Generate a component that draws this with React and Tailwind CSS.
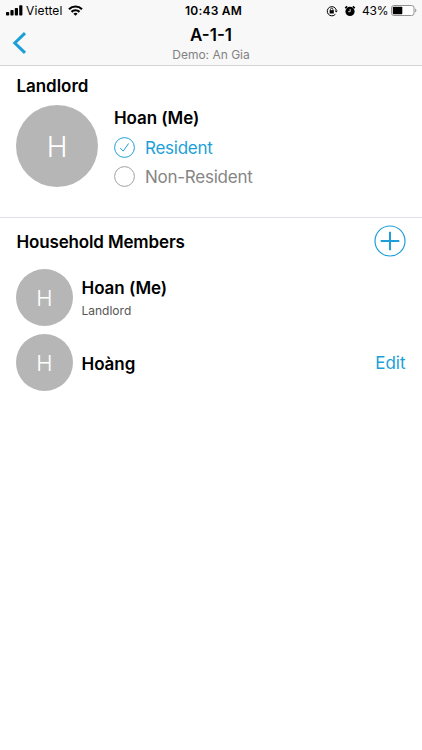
import React, { useState } from 'react';

const members = [
  { id: 1, name: 'Hoan (Me)', role: 'Landlord' },
  { id: 2, name: 'Hoàng', editable: true },
];

const StatusBar = function () {
  return (
    <div className="grid h-[21px] grid-cols-[1fr_auto_1fr] items-center pl-[6px] pr-[5px] text-[12px] leading-[20px]">
      <div className="flex items-center">
        <svg width="17" height="11" viewBox="0 0 17 11">
          <rect x="0" y="7" width="3.2" height="3.5" rx="0.8" />
          <rect x="4.4" y="5" width="3.2" height="5.5" rx="0.8" />
          <rect x="8.8" y="3" width="3.2" height="7.5" rx="0.8" />
          <rect x="13.2" y="0.3" width="3.2" height="10.2" rx="0.8" />
        </svg>
        <span className="ml-[3px] w-[37px] whitespace-nowrap tracking-[0.15px]">Viettel</span>
        <svg className="ml-[5px]" width="15" height="11" viewBox="0 0 15 11" fill="none" stroke="#000" strokeWidth="2.2">
          <path d="M1 4.2a9.2 9.2 0 0 1 13 0" />
          <path d="M3.5 6.9a5.7 5.7 0 0 1 8 0" />
          <path d="M7.5 10.8L5.4 8.7a3 3 0 0 1 4.2 0z" fill="#000" stroke="none" />
        </svg>
      </div>
      <span className="pl-[4px] font-semibold tracking-[0.2px]">10:43 AM</span>
      <div className="flex items-center justify-end">
        <svg width="12" height="12" viewBox="0 0 12 12" fill="none" stroke="#000">
          <path d="M9.4 9.2A4.6 4.6 0 1 1 10.3 5" />
          <path d="M8.6 5.4h3.2l-1.6 2.2z" fill="#000" stroke="none" />
          <rect x="3.6" y="5.2" width="4.2" height="3.3" fill="#000" stroke="none" />
          <path d="M4.5 5.5V4.4a1.2 1.2 0 0 1 2.4 0v1.1" strokeWidth="0.8" />
        </svg>
        <svg className="ml-[6px]" width="12" height="12" viewBox="0 0 12 12" fill="none" stroke="#000">
          <circle cx="6" cy="6.4" r="4.6" fill="#000" stroke="none" />
          <path d="M1.2 3.2l2-1.8M10.8 3.2l-2-1.8" strokeWidth="1.6" />
          <path d="M6.2 4v2.7H4.2" stroke="#fff" strokeWidth="0.8" />
        </svg>
        <span className="ml-[6px] w-[26px] whitespace-nowrap tracking-[-0.2px]">43%</span>
        <svg className="ml-[3px]" width="26" height="11" viewBox="0 0 26 11">
          <rect x="0.5" y="0.5" width="22.5" height="10" rx="2.3" fill="#fff" stroke="#929292" />
          <rect x="1.8" y="1.8" width="9.5" height="7.4" rx="0.8" />
          <path d="M24.2 3.6c1.6.5 1.6 3.3 0 3.8z" fill="#929292" />
        </svg>
      </div>
    </div>
  );
};

const Avatar = function ({ name, large }) {
  return (
    <div
      className={
        large
          ? 'flex size-[82px] shrink-0 items-center justify-center rounded-full bg-[#b6b6b6] pt-px text-[28px] font-light text-white'
          : 'flex size-[57px] shrink-0 items-center justify-center rounded-full bg-[#b6b6b6] pt-[2px] text-[22px] font-light text-white'
      }
    >
      {name.charAt(0)}
    </div>
  );
};

const ResidentOption = function ({ label, checked, onSelect }) {
  return (
    <button
      className={
        checked
          ? 'flex h-[29px] items-center gap-[10px] text-[17px] tracking-[-0.25px] text-[#1c9fd8]'
          : 'flex h-[29px] items-center gap-[10px] text-[17px] tracking-[-0.25px] text-[#858585]'
      }
      onClick={onSelect}
    >
      <svg width="21" height="21" viewBox="0 0 21 21" fill="none" stroke={checked ? '#1c9fd8' : '#a0a0a0'}>
        <circle cx="10.5" cy="10.5" r="9.9" />
        {checked && <path d="M6.2 11.1l3 3 5.4-7.6" />}
      </svg>
      <span className="pt-[2px]">{label}</span>
    </button>
  );
};

const UnitDetail = function () {
  const [resident, setResident] = useState(true);

  return (
    <div className="h-[750px] w-full overflow-hidden bg-white font-['Inter',sans-serif] text-black">
      <header className="h-[66px] border-b border-[#d5d5d7] bg-[#f8f8f8]">
        <StatusBar />
        <div className="grid grid-cols-[60px_1fr_60px]">
          <button className="flex h-[44px] items-center pl-[12px]">
            <svg width="15" height="22" viewBox="0 0 15 22" fill="none" stroke="#1c9fd8" strokeWidth="3">
              <path d="M13 1.2L2.8 11L13 20.8" />
            </svg>
          </button>
          <div className="flex flex-col items-center pt-[4px]">
            <h1 className="text-[17px] leading-[20px] font-semibold">A-1-1</h1>
            <p className="text-[12px] leading-[20px] text-[#828282]">Demo: An Gia</p>
          </div>
        </div>
      </header>

      <section className="h-[152px] border-b border-[#dfe1e6] px-[16px] pt-[9px]">
        <h2 className="pl-[0.5px] text-[17px] leading-[22px] font-semibold tracking-[-0.05px]">Landlord</h2>
        <div className="mt-[8px] flex gap-[16px]">
          <Avatar name="Hoan" large />
          <div className="flex flex-col items-start pt-px">
            <h3 className="mb-[3px] text-[17px] leading-[24px] font-semibold tracking-[-0.1px]">Hoan (Me)</h3>
            <ResidentOption label="Resident" checked={resident} onSelect={() => setResident(true)} />
            <ResidentOption label="Non-Resident" checked={!resident} onSelect={() => setResident(false)} />
          </div>
        </div>
      </section>

      <section className="px-[16px] pt-[7px]">
        <div className="flex h-[32px] items-center justify-between">
          <h2 className="pt-[3px] pl-[0.5px] text-[17px] font-semibold tracking-[-0.15px]">Household Members</h2>
          <button>
            <svg width="32" height="32" viewBox="0 0 32 32" fill="none" stroke="#1c9fd8">
              <circle cx="16" cy="16" r="15" strokeWidth="1.2" />
              <path d="M16 6.7v18.6M6.7 16h18.6" strokeWidth="2" />
            </svg>
          </button>
        </div>
        <div className="mt-[12px] flex flex-col gap-[8px]">
          {members.map((member) => (
            <div key={member.id} className="flex h-[57px] items-center">
              <Avatar name={member.name} />
              <div className="ml-[8.5px] flex-1 pt-[3px]">
                <p className="text-[17px] leading-[23px] font-semibold tracking-[-0.05px]">{member.name}</p>
                {member.role && <p className="text-[12px] leading-[22px] text-[#555]">{member.role}</p>}
              </div>
              {member.editable && <button className="pt-[2px] pr-[0.5px] text-[17px] text-[#1c9fd8]">Edit</button>}
            </div>
          ))}
        </div>
      </section>
    </div>
  );
};

export default UnitDetail;
